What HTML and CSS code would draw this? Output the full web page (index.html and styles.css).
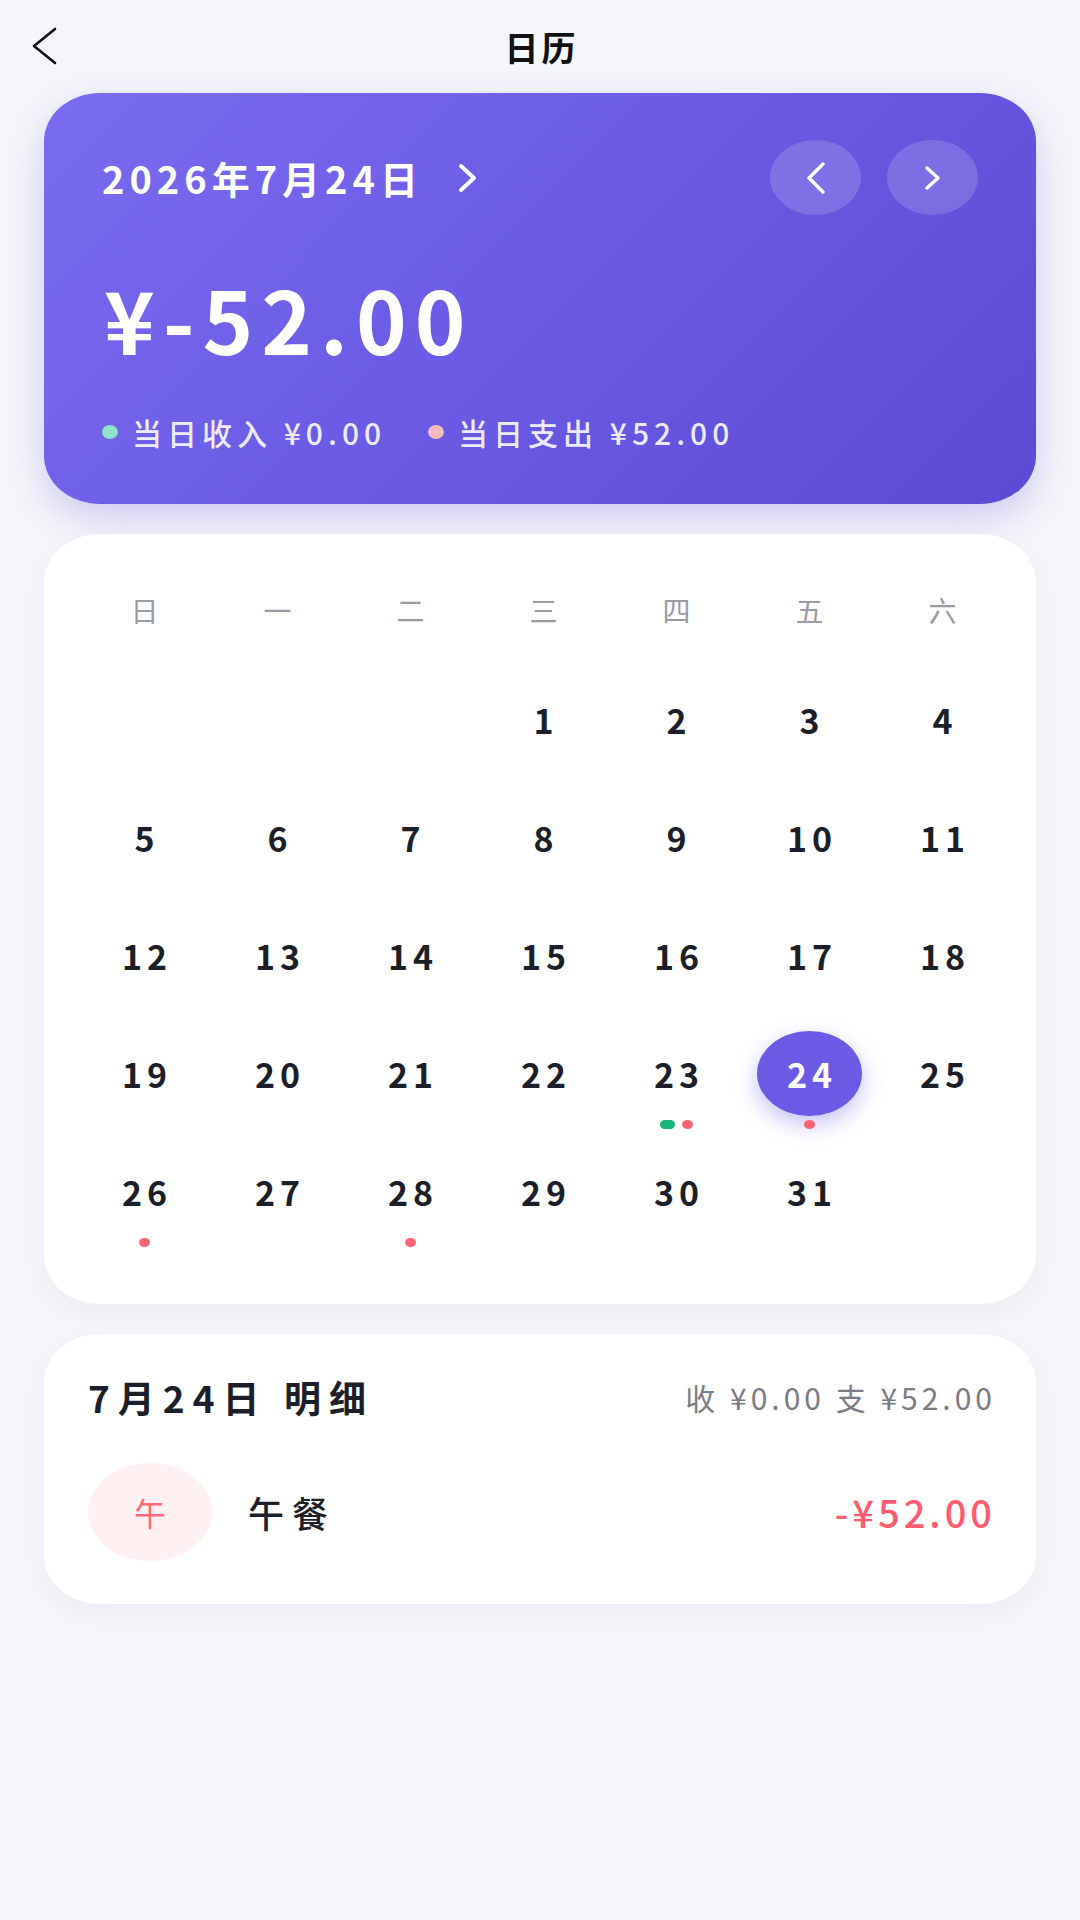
FILE: index.html
```html
<!DOCTYPE html>
<html lang="zh-CN">
<head>
<meta charset="utf-8">
<title>日历</title>
<link rel="stylesheet" href="styles.css">
</head>
<body>
<div class="app">
  <header class="topbar">
    <button class="back" aria-label="返回">
      <svg width="30" height="40" viewBox="0 0 30 40"><polyline points="25,3 4,20 25,37" fill="none" stroke="#111" stroke-width="2.6" stroke-linecap="round" stroke-linejoin="round"/></svg>
    </button>
    <h1 class="title">日历</h1>
    <span class="spacer"></span>
  </header>

  <main class="content">
    <section class="summary">
      <div class="summary-top">
        <div class="date">2026年7月24日<svg class="date-arrow" width="24" height="30" viewBox="0 0 24 30"><polyline points="6,3 19,15 6,27" fill="none" stroke="#fff" stroke-width="4" stroke-linecap="round" stroke-linejoin="round"/></svg></div>
        <div class="nav">
          <button class="nav-btn" aria-label="上一天"><svg width="26" height="32" viewBox="0 0 26 32"><polyline points="20,2 6,16 20,30" fill="none" stroke="#fff" stroke-width="3.4" stroke-linecap="round" stroke-linejoin="round"/></svg></button>
          <button class="nav-btn" aria-label="下一天"><svg width="26" height="32" viewBox="0 0 26 32"><polyline points="7,6 18,16 7,26" fill="none" stroke="#fff" stroke-width="3.4" stroke-linecap="round" stroke-linejoin="round"/></svg></button>
        </div>
      </div>
      <div class="amount">¥-52.00</div>
      <div class="stats">
        <span class="stat"><i class="dot dot-income"></i>当日收入 ¥0.00</span>
        <span class="stat"><i class="dot dot-expense"></i>当日支出 ¥52.00</span>
      </div>
    </section>

    <section class="calendar">
      <div class="weekdays">
        <span>日</span><span>一</span><span>二</span><span>三</span><span>四</span><span>五</span><span>六</span>
      </div>
      <div class="days">
        <div class="day"></div><div class="day"></div><div class="day"></div>
        <div class="day"><span class="num">1</span></div>
        <div class="day"><span class="num">2</span></div>
        <div class="day"><span class="num">3</span></div>
        <div class="day"><span class="num">4</span></div>
        <div class="day"><span class="num">5</span></div>
        <div class="day"><span class="num">6</span></div>
        <div class="day"><span class="num">7</span></div>
        <div class="day"><span class="num">8</span></div>
        <div class="day"><span class="num">9</span></div>
        <div class="day"><span class="num">10</span></div>
        <div class="day"><span class="num">11</span></div>
        <div class="day"><span class="num">12</span></div>
        <div class="day"><span class="num">13</span></div>
        <div class="day"><span class="num">14</span></div>
        <div class="day"><span class="num">15</span></div>
        <div class="day"><span class="num">16</span></div>
        <div class="day"><span class="num">17</span></div>
        <div class="day"><span class="num">18</span></div>
        <div class="day"><span class="num">19</span></div>
        <div class="day"><span class="num">20</span></div>
        <div class="day"><span class="num">21</span></div>
        <div class="day"><span class="num">22</span></div>
        <div class="day"><span class="num">23</span><span class="marks"><i class="mark mark-in"></i><i class="mark mark-out"></i></span></div>
        <div class="day"><span class="num num-selected">24</span><span class="marks"><i class="mark mark-out"></i></span></div>
        <div class="day"><span class="num">25</span></div>
        <div class="day"><span class="num">26</span><span class="marks"><i class="mark mark-out"></i></span></div>
        <div class="day"><span class="num">27</span></div>
        <div class="day"><span class="num">28</span><span class="marks"><i class="mark mark-out"></i></span></div>
        <div class="day"><span class="num">29</span></div>
        <div class="day"><span class="num">30</span></div>
        <div class="day"><span class="num">31</span></div>
        <div class="day"></div>
      </div>
    </section>

    <section class="detail">
      <div class="detail-head">
        <h2 class="detail-title">7月24日 明细</h2>
        <span class="detail-sum">收 ¥0.00 支 ¥52.00</span>
      </div>
      <div class="record">
        <span class="record-icon">午</span>
        <span class="record-name">午餐</span>
        <span class="record-amount">-¥52.00</span>
      </div>
    </section>
  </main>
</div>
</body>
</html>
```

FILE: styles.css
```css
* { box-sizing: border-box; }

html, body {
  margin: 0;
  padding: 0;
}

body {
  background: #f5f6fa;
  font-family: "Noto Sans CJK SC", "Noto Sans", sans-serif;
  color: #1c1f2a;
  width: 1080px;
  min-height: 1920px;
}

.app {
  width: 1080px;
  min-height: 1920px;
}

/* top bar */
.topbar {
  height: 93px;
  display: grid;
  grid-template-columns: 120px 1fr 120px;
  align-items: center;
  background: #f5f6fa;
}

.back {
  border: 0;
  background: none;
  padding: 0 0 0 30px;
  display: flex;
  align-items: center;
  height: 93px;
  margin-top: -2px;
}

.title {
  margin: 0;
  text-align: center;
  font-size: 34px;
  font-weight: 700;
  line-height: 50px;
  letter-spacing: 3px;
  padding-left: 3px;
  color: #111;
}

/* content */
.content {
  padding: 0 44px;
  display: flex;
  flex-direction: column;
  gap: 30px;
}

/* summary card */
.summary {
  border-radius: 56px / 48px;
  background: linear-gradient(135deg, #7a6cf0 0%, #6a5ae4 50%, #5a4ad4 100%);
  box-shadow: 0 14px 36px rgba(104, 88, 228, 0.28);
  padding: 47px 58px 52px 58px;
  color: #fff;
}

.summary-top {
  display: flex;
  align-items: center;
  justify-content: space-between;
  height: 75px;
}

.date {
  display: flex;
  align-items: center;
  font-size: 38px;
  font-weight: 700;
  line-height: 50px;
  letter-spacing: 5px;
}

.date-arrow {
  margin-left: 32px;
}

.nav {
  display: flex;
  gap: 26px;
}

.nav-btn {
  width: 91px;
  height: 75px;
  border-radius: 50%;
  border: 0;
  background: rgba(255, 255, 255, 0.16);
  display: flex;
  align-items: center;
  justify-content: center;
  padding: 0;
}

.amount {
  margin-top: 53px;
  font-size: 86px;
  font-weight: 700;
  line-height: 100px;
  letter-spacing: 8px;
  margin-left: 2px;
}

.stats {
  margin-top: 44px;
  display: flex;
  align-items: center;
  gap: 42px;
  height: 40px;
}

.stat {
  display: flex;
  align-items: center;
  font-size: 30px;
  font-weight: 500;
  line-height: 40px;
  letter-spacing: 5px;
  color: rgba(255, 255, 255, 0.9);
}

.dot {
  display: inline-block;
  width: 16px;
  height: 14px;
  border-radius: 50%;
  margin-right: 14px;
}

.dot-income { background: #8fe3c6; }
.dot-expense { background: #f3bcbc; }

/* calendar card */
.calendar {
  background: #fff;
  border-radius: 56px / 48px;
  box-shadow: 0 8px 26px rgba(40, 50, 110, 0.05);
  padding: 43px 27px 37px 34px;
}

.weekdays {
  display: grid;
  grid-template-columns: repeat(7, 1fr);
  height: 66px;
  align-items: center;
  margin-bottom: 34px;
}

.weekdays span {
  text-align: center;
  font-size: 28px;
  line-height: 40px;
  color: #9a9aa6;
}

.days {
  display: grid;
  grid-template-columns: repeat(7, 1fr);
  grid-auto-rows: 118px;
}

.day {
  display: flex;
  flex-direction: column;
  align-items: center;
}

.num {
  height: 85px;
  min-width: 105px;
  line-height: 85px;
  text-align: center;
  font-size: 34px;
  font-weight: 600;
  letter-spacing: 5px;
  padding-left: 5px;
  color: #1c1f2a;
}

.num-selected {
  width: 105px;
  border-radius: 50%;
  background: #6a5ae6;
  color: #fff;
  font-weight: 700;
  box-shadow: 0 8px 22px rgba(106, 90, 230, 0.38);
}

.marks {
  display: flex;
  gap: 7px;
  margin-top: 4px;
  height: 9px;
}

.mark {
  display: block;
  width: 11px;
  height: 9px;
  border-radius: 50%;
}

.mark-in { background: #19b57b; width: 15px; border-radius: 5px; }
.mark-out { background: #fb6475; }

/* detail card */
.detail {
  background: #fff;
  border-radius: 56px / 48px;
  box-shadow: 0 8px 26px rgba(40, 50, 110, 0.05);
  padding: 38px 44px 43px 44px;
}

.detail-head {
  display: flex;
  align-items: center;
  justify-content: space-between;
  height: 50px;
}

.detail-title {
  margin: 0;
  font-size: 37px;
  font-weight: 700;
  line-height: 50px;
  letter-spacing: 8px;
  color: #1c1f2a;
}

.detail-sum {
  font-size: 30px;
  line-height: 50px;
  letter-spacing: 4px;
  margin-right: -4px;
  color: #7a7b85;
}

.record {
  margin-top: 41px;
  display: flex;
  align-items: center;
}

.record-icon {
  width: 124px;
  height: 98px;
  border-radius: 50%;
  background: #fff0f1;
  color: #ff6b7b;
  font-size: 32px;
  line-height: 98px;
  text-align: center;
  letter-spacing: 4px;
  padding-left: 4px;
  flex: none;
}

.record-name {
  margin-left: 36px;
  font-size: 36px;
  font-weight: 500;
  line-height: 50px;
  letter-spacing: 8px;
  color: #1c1f2a;
  flex: 1;
}

.record-amount {
  font-size: 38px;
  font-weight: 500;
  line-height: 50px;
  letter-spacing: 4px;
  margin-right: -4px;
  color: #fd5b70;
}
```
